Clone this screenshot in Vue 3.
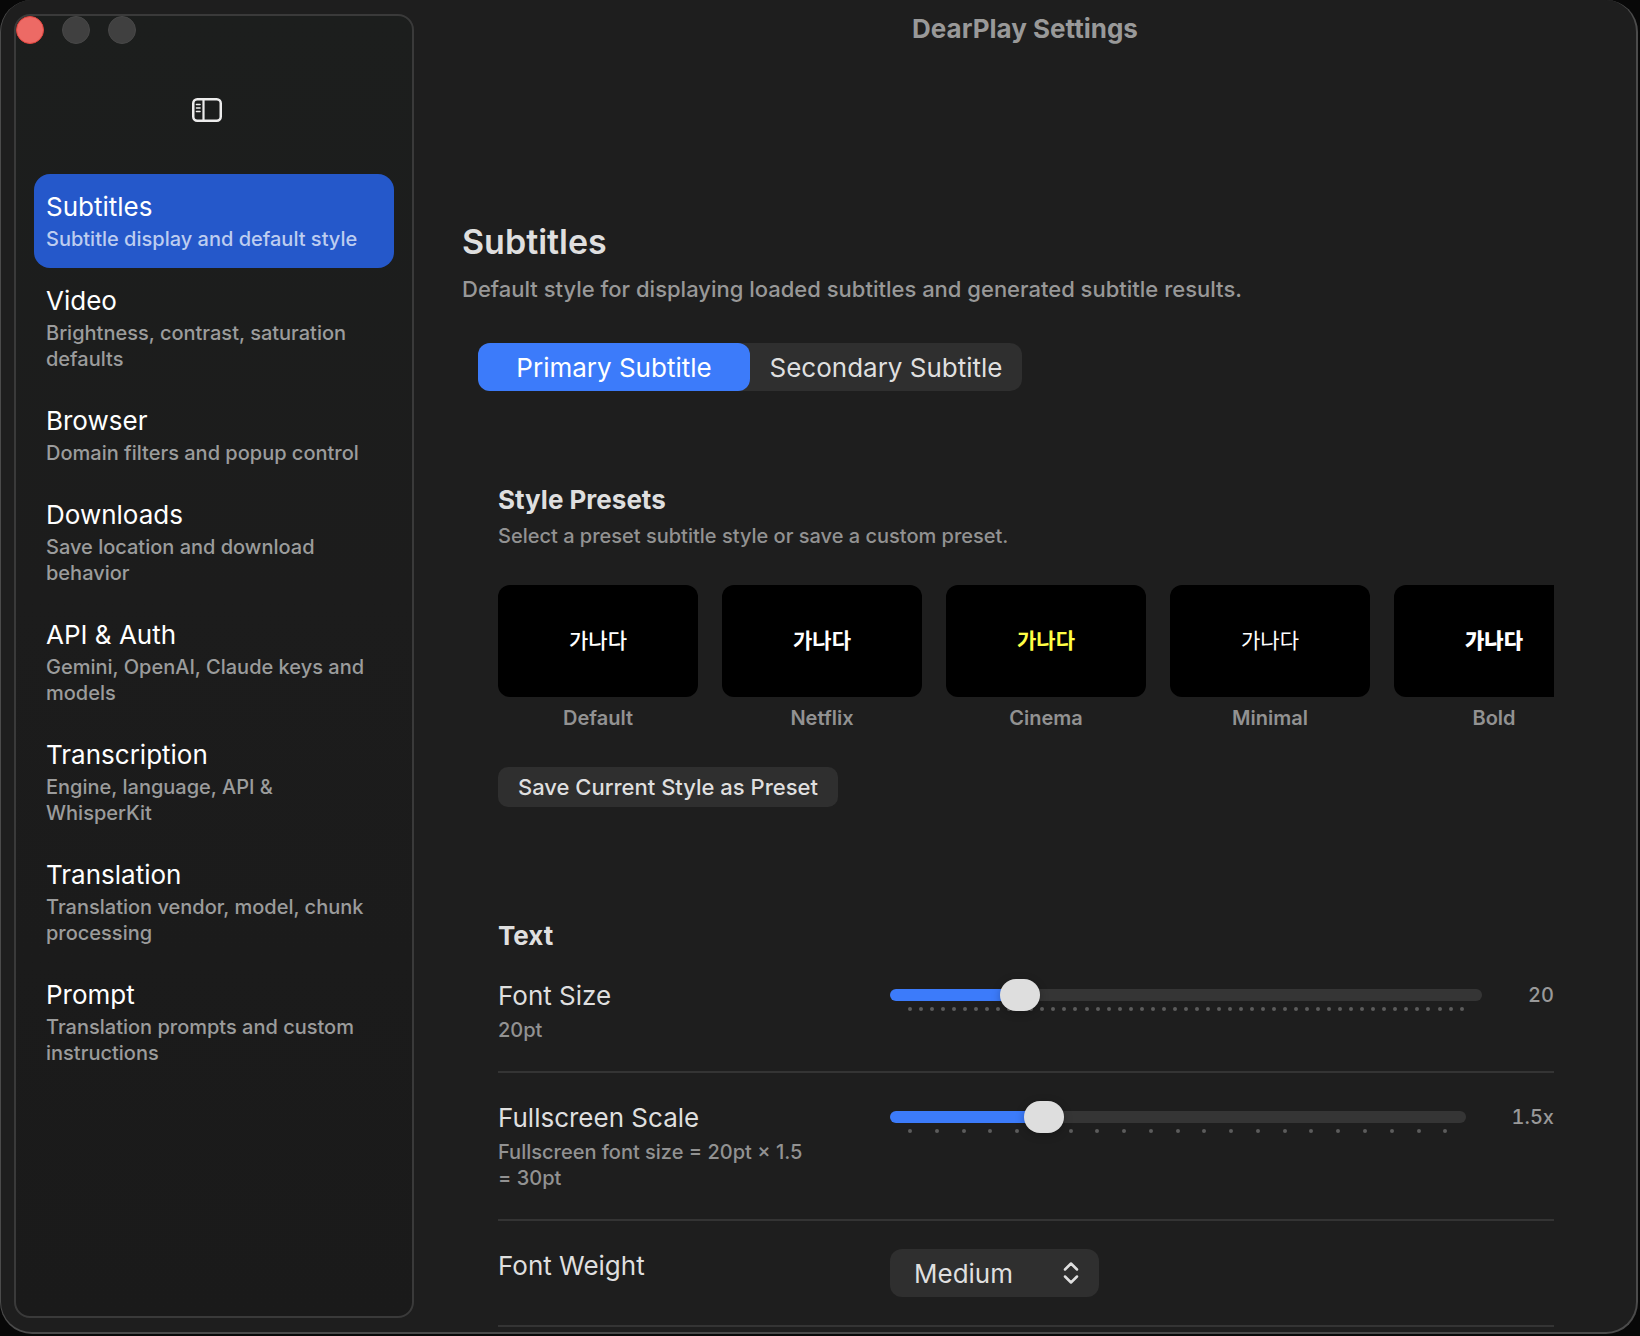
<script setup>
import { ref } from 'vue'

const sections = [
  { id: 'subtitles', title: 'Subtitles', hint: 'Subtitle display and default style' },
  { id: 'video', title: 'Video', hint: 'Brightness, contrast, saturation defaults' },
  { id: 'browser', title: 'Browser', hint: 'Domain filters and popup control' },
  { id: 'downloads', title: 'Downloads', hint: 'Save location and download behavior' },
  { id: 'api', title: 'API & Auth', hint: 'Gemini, OpenAI, Claude keys and models' },
  { id: 'transcription', title: 'Transcription', hint: 'Engine, language, API & WhisperKit' },
  { id: 'translation', title: 'Translation', hint: 'Translation vendor, model, chunk processing' },
  { id: 'prompt', title: 'Prompt', hint: 'Translation prompts and custom instructions' },
]
const presets = [
  { id: 'default', name: 'Default' },
  { id: 'netflix', name: 'Netflix' },
  { id: 'cinema', name: 'Cinema' },
  { id: 'minimal', name: 'Minimal' },
  { id: 'bold', name: 'Bold' },
]

const active = ref('subtitles')
const track = ref('primary')
const fontSize = ref(20)
const scale = ref(1.5)
const weight = ref('Medium')
</script>

<template>
  <div class="window">
    <aside class="sidebar">
      <div class="lights">
        <button class="light close" aria-label="Close"></button>
        <button class="light" aria-label="Minimize"></button>
        <button class="light" aria-label="Zoom"></button>
      </div>
      <button class="toggle" aria-label="Toggle sidebar">
        <svg width="30" height="24" viewBox="0 0 30 24" fill="none" stroke="currentColor">
          <rect x="1.250" y="1.250" width="27.500" height="21.500" rx="4" stroke-width="2.500" />
          <path d="M11.500 1v22" stroke-width="2.200" />
          <path d="M4.500 6.500h3.500M4.500 10h3.500M4.500 13.500h3.500" stroke-width="1.600" stroke-linecap="round" />
        </svg>
      </button>
      <nav class="nav">
        <a
          v-for="s in sections"
          :key="s.id"
          :href="'#' + s.id"
          class="item"
          :class="{ selected: active === s.id }"
          @click.prevent="active = s.id"
        >
          <span class="item-title">{{ s.title }}</span>
          <span class="item-hint">{{ s.hint }}</span>
        </a>
      </nav>
    </aside>

    <main class="main">
      <header class="titlebar">DearPlay Settings</header>

      <div class="page">
        <h1>Subtitles</h1>
        <p class="lead">Default style for displaying loaded subtitles and generated subtitle results.</p>

        <div class="segmented">
          <button :class="{ on: track === 'primary' }" @click="track = 'primary'">Primary Subtitle</button>
          <button :class="{ on: track === 'secondary' }" @click="track = 'secondary'">Secondary Subtitle</button>
        </div>

        <section class="group presets">
          <h2>Style Presets</h2>
          <p class="note">Select a preset subtitle style or save a custom preset.</p>
          <div class="cards">
            <button v-for="p in presets" :key="p.id" class="card">
              <span class="preview" :class="p.id" lang="ko">가나다</span>
              <span class="card-name">{{ p.name }}</span>
            </button>
          </div>
          <button class="save">Save Current Style as Preset</button>
        </section>

        <section class="group">
          <h2>Text</h2>
          <div class="row">
            <div class="row-label">
              <label for="font-size">Font Size</label>
              <p class="note">{{ fontSize }}pt</p>
            </div>
            <div class="control">
              <div class="slider">
                <div class="ticks"><i v-for="n in 51" :key="n"></i></div>
                <div class="bar"><div class="fill" :style="{ width: (fontSize - 10) * 2 + '%' }"></div></div>
                <input id="font-size" v-model.number="fontSize" type="range" min="10" max="60" step="1" />
              </div>
              <output for="font-size">{{ fontSize }}</output>
            </div>
          </div>
          <div class="row">
            <div class="row-label">
              <label for="scale">Fullscreen Scale</label>
              <p class="note">Fullscreen font size = {{ fontSize }}pt × {{ scale }} = {{ Math.round(fontSize * scale) }}pt</p>
            </div>
            <div class="control">
              <div class="slider">
                <div class="ticks"><i v-for="n in 21" :key="n"></i></div>
                <div class="bar"><div class="fill" :style="{ width: (scale - 1) * 50 + '%' }"></div></div>
                <input id="scale" v-model.number="scale" type="range" min="1" max="3" step="0.1" />
              </div>
              <output for="scale">{{ scale }}x</output>
            </div>
          </div>
          <div class="row">
            <div class="row-label"><label for="weight">Font Weight</label></div>
            <div class="control">
              <div class="picker">
                <select id="weight" v-model="weight">
                  <option>Regular</option>
                  <option>Medium</option>
                  <option>Bold</option>
                </select>
                <svg width="16" height="24" viewBox="0 0 16 24" fill="none" stroke="currentColor" stroke-width="2.500" stroke-linecap="round" stroke-linejoin="round">
                  <path d="M2 8.500L8 2.500l6 6M2 15.500l6 6 6-6" />
                </svg>
              </div>
            </div>
          </div>
        </section>
      </div>
    </main>
  </div>
</template>

<style>
html,
body,
#app {
  height: 100%;
}
body {
  margin: 0;
  background: #080808;
  overflow: hidden;
}
</style>

<style scoped>
* {
  box-sizing: border-box;
}
h1,
h2,
p {
  margin: 0;
}
button,
select {
  font: inherit;
  color: inherit;
  border: 0;
  padding: 0;
  background: none;
}
.window {
  height: calc(100% - 2px);
  margin-right: 2px;
  display: flex;
  overflow: hidden;
  border: solid #4b4b4b;
  border-width: 0 2px 2px 1px;
  border-radius: 32px;
  background: #1e1e1e;
  color: #dfdfdf;
  font-family: Inter, 'Noto Sans CJK KR', sans-serif;
  font-size: 26px;
  line-height: 32px;
}
.sidebar {
  flex: none;
  width: 400px;
  margin: 14px 0 14px 13px;
  border: 2px solid #3a3a3a;
  border-radius: 16px;
  background: linear-gradient(#1c1e1d, #1c1c1c 45%, #1a1a1a);
}
.lights {
  display: flex;
  gap: 18px;
}
.light {
  width: 28px;
  height: 28px;
  border-radius: 50%;
  background: #404040;
  border: 1px solid #484848;
}
.close {
  background: #ed6a65;
  border-color: #e2463f;
}
.toggle {
  display: block;
  height: 24px;
  margin: 54px 0 52px 176px;
  color: #ececec;
}
.toggle svg {
  display: block;
}
.nav {
  padding: 0 18px;
}
.item {
  display: flex;
  flex-direction: column;
  gap: 3px;
  padding: 17px 16px 16px 12px;
  border-radius: 16px;
  text-decoration: none;
  color: #fff;
}
.item-hint {
  font-size: 20px;
  line-height: 26px;
  font-weight: 500;
  color: #9b9c9c;
}
.selected {
  background: #2558ca;
}
.selected .item-hint {
  color: #bdcdf0;
}
.main {
  flex: 1;
  min-width: 0;
  overflow: hidden;
}
.titlebar {
  padding-top: 13px;
  height: 224px;
  text-align: center;
  font-weight: 700;
  color: #999;
}
.page {
  padding: 0 46px 0 48px;
}
h1 {
  font-size: 34px;
  line-height: 36px;
  font-weight: 600;
}
.lead {
  margin-top: 14px;
  font-size: 22px;
  line-height: 30px;
  font-weight: 500;
  color: #989898;
}
.segmented {
  width: 544px;
  height: 48px;
  margin: 39px 0 0 16px;
  display: flex;
  border-radius: 12px;
  background: #2f2f2f;
}
.segmented button {
  flex: 1;
  padding-top: 2px;
  border-radius: 12px;
  white-space: nowrap;
}
.segmented .on {
  background: #3c7bfa;
  color: #fff;
}
.group {
  padding: 0 36px;
}
.presets {
  margin: 93px 0 113px;
}
h2 {
  font-size: 26px;
  line-height: 32px;
  font-weight: 700;
}
.note {
  font-size: 20px;
  line-height: 26px;
  font-weight: 500;
  color: #929292;
}
.presets .note {
  margin-top: 7px;
}
.cards {
  display: flex;
  gap: 24px;
  margin-top: 36px;
  overflow: hidden;
}
.card {
  flex: none;
  width: 200px;
}
.preview {
  display: grid;
  place-items: center;
  height: 112px;
  padding-bottom: 5px;
  border-radius: 12px;
  background: #000;
  color: #fff;
  font-family: 'Noto Sans CJK KR', sans-serif;
  font-size: 21px;
  font-weight: 500;
}
.netflix {
  font-weight: 600;
}
.cinema {
  font-weight: 700;
  color: #ffff45;
}
.minimal {
  font-weight: 400;
}
.bold {
  font-weight: 800;
}
.card-name {
  display: block;
  margin-top: 8px;
  font-size: 20px;
  line-height: 26px;
  font-weight: 600;
  color: #929292;
}
.save {
  height: 40px;
  margin-top: 36px;
  padding: 0 20px;
  border-radius: 10px;
  background: #2f2f2f;
  font-size: 22px;
  line-height: 40px;
  font-weight: 500;
}
.row {
  display: grid;
  grid-template-columns: 320px 1fr;
  column-gap: 72px;
  padding: 28px 0;
  border-bottom: 2px solid #343434;
}
h2 + .row {
  padding-top: 27px;
}
.row-label {
  padding-top: 1px;
}
.row-label label {
  display: block;
}
.row-label .note {
  margin-top: 5px;
}
.control {
  display: flex;
  align-items: flex-start;
}
.slider {
  flex: 1;
  position: relative;
  height: 32px;
}
.bar {
  position: absolute;
  inset: 10px 0;
  padding: 0 20px;
  border-radius: 6px;
  background: linear-gradient(90deg, #3c7bfa 20px, #353535 20px);
}
.fill {
  height: 12px;
  background: #3c7bfa;
}
.ticks {
  position: absolute;
  inset: 28px 18px 0;
  display: flex;
  justify-content: space-between;
}
.ticks i {
  width: 4px;
  height: 4px;
  border-radius: 50%;
  background: #5c5c5c;
}
.slider input {
  position: absolute;
  inset: 0;
  width: 100%;
  height: 32px;
  margin: 0;
  appearance: none;
  background: none;
}
.slider input::-webkit-slider-thumb {
  appearance: none;
  width: 40px;
  height: 32px;
  border-radius: 16px;
  background: #dedede;
  box-shadow: 0 2px 8px rgba(0, 0, 0, 0.25);
}
output {
  margin-left: 46px;
  font-size: 20px;
  font-weight: 500;
  font-variant-numeric: tabular-nums;
  color: #999;
}
.picker {
  position: relative;
  width: 209px;
  height: 48px;
}
.picker select {
  width: 100%;
  height: 48px;
  padding: 2px 24px 0;
  appearance: none;
  border-radius: 12px;
  background: #2f2f2f;
}
.picker svg {
  position: absolute;
  top: 12px;
  right: 20px;
  pointer-events: none;
}
</style>
